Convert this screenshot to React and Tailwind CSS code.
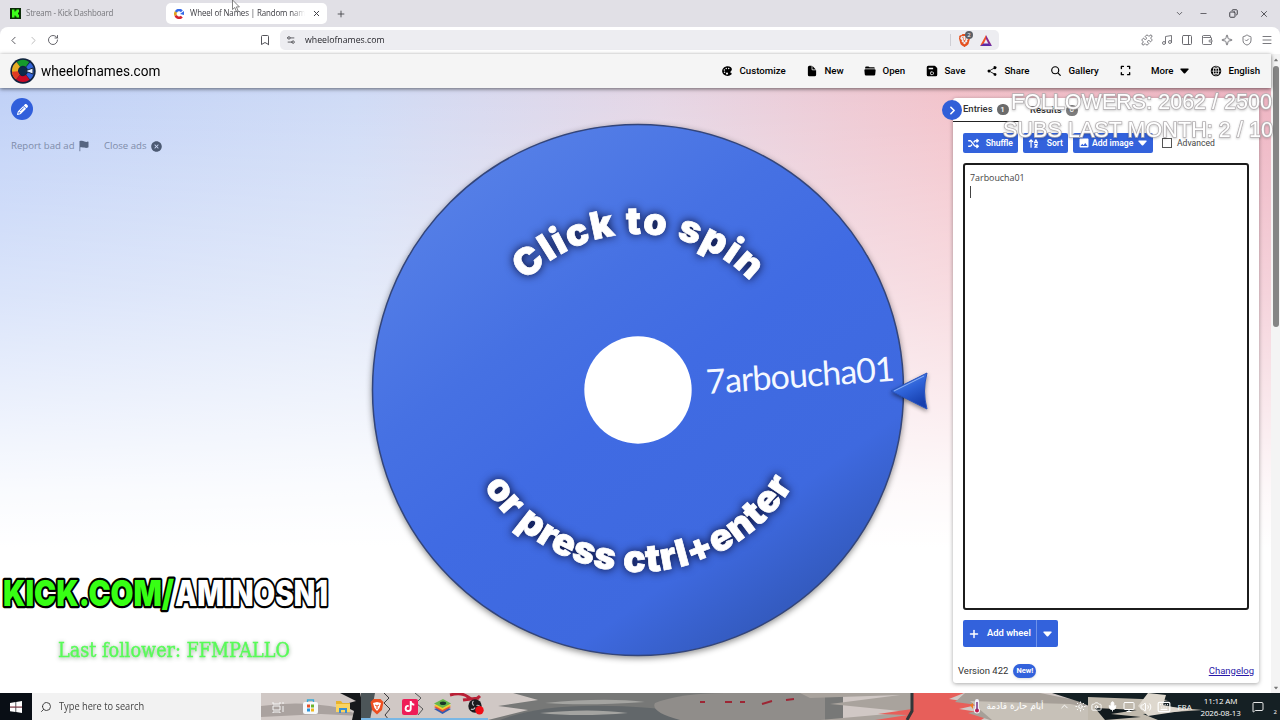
import { useState } from "react";
import {
    IoColorPalette,
    IoDocument,
    IoFolderOpen,
    IoSave,
    IoShareSocial,
    IoSearch,
    IoGlobe,
    IoCaretDown,
    IoCloseCircle,
    IoFlag,
} from "react-icons/io5";
import { MdImage } from "react-icons/md";
import { FaBrave, FaTiktok, FaArrowUpAZ, FaExpand, FaPencil, FaShuffle } from "react-icons/fa6";
import {
    Bookmark,
    ChevronDown,
    ChevronLeft,
    ChevronRight,
    ChevronUp,
    Copy,
    Keyboard,
    Menu,
    Mic,
    Minus,
    Monitor,
    Music,
    PanelRight,
    Plus,
    Puzzle,
    RotateCw,
    Search,
    Settings2,
    ShieldCheck,
    Sparkle,
    Sun,
    Volume2,
    Camera,
    MessageSquare,
    Wallet,
    X,
} from "lucide-react";

const navItems = [
    { label: "Customize", icon: IoColorPalette, width: "w-[85px]" },
    { label: "New", icon: IoDocument, width: "w-[58px]" },
    { label: "Open", icon: IoFolderOpen, width: "w-[62px]" },
    { label: "Save", icon: IoSave, width: "w-[60px]" },
    { label: "Share", icon: IoShareSocial, width: "w-[64px]" },
    { label: "Gallery", icon: IoSearch, width: "w-[70px]" },
];

function Caret({ className = "" }) {
    return (
        <svg width="9" height="6" viewBox="0 0 9 6" className={className}>
            <path d="M1 .5h7q1 .2.500 1L5.200 5.200q-.7.600-1.400 0L.5 1.500Q0 .7 1 .5z" fill="currentColor" />
        </svg>
    );
}

function TabStrip() {
    return (
        <div className="flex h-[27px] items-center bg-[#e1e0e6] text-[8.8px] text-[#3c3c42]">
            <div className="flex w-[166px] items-center pl-[10px] text-[#77777c]">
                <svg width="11" height="11" viewBox="0 0 11 11">
                    <rect width="11" height="11" fill="#0a2a06" />
                    <path d="M2 1.5h2.5v2h1v-1h1v-1H9v3H8v2h1v3H6.500v-1h-1v-1h-1v2H2z" fill="#3dff1a" />
                </svg>
                <span className="ml-[5px] inline-block origin-left scale-x-[0.9] whitespace-nowrap tracking-[-0.02em]">
                    Stream - Kick Dashboard
                </span>
            </div>
            <div className="flex h-[21px] w-[161px] items-center rounded-[5px] bg-white pl-[8px]">
                <svg width="10" height="10" viewBox="0 0 10 10" fill="none" strokeWidth="2.6">
                    <path d="M1.700 6.500A3.600 3.600 0 0 1 2 2.800" stroke="#e0a01c" />
                    <path d="M2 2.800A3.600 3.600 0 0 1 7.800 2.300" stroke="#3369e8" />
                    <path d="M1.700 6.500A3.600 3.600 0 0 0 7.800 7.600" stroke="#d5232f" />
                    <path d="M6 5l4-3v4z" fill="#3369e8" />
                </svg>
                <span className="ml-[6px] w-[115px] overflow-hidden [mask-image:linear-gradient(to_right,black_88%,transparent)]">
                    <span className="inline-block origin-left scale-x-[0.9] whitespace-nowrap tracking-[-0.015em]">
                        Wheel of Names | Random name
                    </span>
                </span>
                <X size={9} strokeWidth={2.6} className="ml-[7px]" />
            </div>
            <Plus size={10} className="ml-[9px]" />
            <div className="ml-auto flex items-center pr-[11px]">
                <ChevronDown size={9} />
                <Minus size={9} className="ml-[15px]" />
                <Copy size={9} strokeWidth={2.600} className="ml-[21px] -scale-x-100" />
                <X size={10} className="ml-[21px]" />
            </div>
        </div>
    );
}

function AddressBar() {
    return (
        <div className="bg-[#e1e0e6]">
            <div className="flex h-[27px] items-center rounded-t-[8px] bg-white pb-[1px] text-[#55555b]">
                <div className="flex w-[259px] items-center gap-[7px] pl-[7px]">
                    <ChevronLeft size={13} strokeWidth={1.800} />
                    <ChevronRight size={13} strokeWidth={1.800} className="text-[#bbb]" />
                    <RotateCw size={12} strokeWidth={1.800} />
                </div>
                <Bookmark size={12} strokeWidth={2} />
                <div className="ml-[9px] flex h-[20px] w-[719px] items-center rounded-[5px] bg-[#ededf1] pl-[6px] pr-[7px]">
                    <Settings2 size={10} strokeWidth={2.200} className="rotate-180" />
                    <span className="ml-[9px] inline-block origin-left scale-x-[0.92] text-[9.5px] text-[#26262b]">
                        wheelofnames.com
                    </span>
                    <div className="ml-auto h-[12px] w-px bg-[#cfcfd5]" />
                    <div className="relative ml-[7px]">
                        <FaBrave size={13} className="text-[#e5511f]" />
                        <span className="absolute -top-[3px] left-[7px] flex h-[8px] w-[8px] items-center justify-center rounded-full bg-[#5c5f66] text-[6px] leading-none text-white">
                            2
                        </span>
                    </div>
                    <svg width="12" height="11" viewBox="0 0 12 11" className="ml-[9px]">
                        <path d="M6 0L0 11l3.500-2L6 4z" fill="#f0502a" />
                        <path d="M6 0l6 11-3.500-2L6 4z" fill="#8a2a90" />
                        <path d="M0 11h12L8.500 8.500h-5z" fill="#5b2aa5" />
                    </svg>
                </div>
                <div className="ml-auto flex items-center gap-[8px] pr-[7px] text-[#6b6b70]">
                    <Puzzle size={12} strokeWidth={1.800} />
                    <Music size={12} strokeWidth={1.800} />
                    <PanelRight size={12} strokeWidth={2} />
                    <Wallet size={12} strokeWidth={1.800} />
                    <Sparkle size={12} strokeWidth={1.800} />
                    <ShieldCheck size={12} strokeWidth={1.800} />
                    <Menu size={12} strokeWidth={1.800} />
                </div>
            </div>
        </div>
    );
}

function Logo() {
    return (
        <svg width="26" height="26" viewBox="0 0 26 26">
            <circle cx="13" cy="13" r="12.700" fill="#10223f" />
            <g fill="none" strokeWidth="6">
                <path d="M8.500 6.300A8 8 0 0 1 17.500 6.400" stroke="#159a2c" />
                <path d="M7.600 18.900A8 8 0 0 1 8.300 6.400" stroke="#e6ad24" />
                <path d="M5 13.500A8 8 0 0 0 8 19.200" stroke="#df3a24" />
                <path d="M8 19.300A8 8 0 0 0 17.800 19.400" stroke="#c90a26" />
                <path d="M18.100 6.800A8 8 0 0 1 18.100 19.100" stroke="#3263d8" />
            </g>
            <circle cx="13" cy="13" r="4" fill="#0c2a4b" />
            <path d="M15 13l8-3v6z" fill="#e9f2ff" stroke="#10223f" strokeWidth="1" />
        </svg>
    );
}

function SiteHeader() {
    return (
        <header className="relative z-10 flex h-[34px] items-center bg-[#f5f5f5] pl-[10px] font-['Roboto',sans-serif] text-black shadow-[0_1px_4px_rgba(0,0,0,0.55)]">
            <Logo />
            <div className="ml-[5px] w-[680px]">
                <span className="inline-block origin-left scale-x-[0.895] text-[15.2px]">wheelofnames.com</span>
            </div>
            <nav className="flex items-center whitespace-nowrap text-[9.7px] font-medium">
                {navItems.map(({ label, icon: Icon, width }) => (
                    <div key={label} className={`flex items-center gap-[6.500px] ${width}`}>
                        <Icon size={12} />
                        {label}
                    </div>
                ))}
                <div className="w-[31px]">
                    <FaExpand size={11} />
                </div>
                <div className="flex w-[59px] items-center gap-[6px]">
                    More
                    <Caret />
                </div>
                <div className="flex items-center gap-[6.500px]">
                    <IoGlobe size={12} />
                    English
                </div>
            </nav>
        </header>
    );
}

function Wheel() {
    return (
        <svg width="593" height="605" viewBox="360 88 593 605" className="shrink-0">
            <defs>
                <linearGradient id="face" x1="0.200" y1="0.050" x2="0.850" y2="0.950">
                    <stop offset="0" stopColor="#5680e7" />
                    <stop offset="0.300" stopColor="#4671e3" />
                    <stop offset="0.500" stopColor="#406be3" />
                    <stop offset="0.780" stopColor="#3e69df" />
                    <stop offset="0.930" stopColor="#345bc0" />
                    <stop offset="1" stopColor="#365cbd" />
                </linearGradient>
                <linearGradient id="tip" x1="0" y1="0" x2="0.500" y2="1">
                    <stop offset="0" stopColor="#5c91ef" />
                    <stop offset="0.550" stopColor="#2e62d8" />
                    <stop offset="1" stopColor="#1740ae" />
                </linearGradient>
                <path id="arcTop" d="M481 391A157 157 0 0 1 795 391" />
                <path id="arcBottom" d="M456 390A182 182 0 0 0 820 390" />
            </defs>
            <circle
                cx="638"
                cy="390"
                r="265.500"
                fill="url(#face)"
                stroke="#33457a"
                strokeWidth="1.500"
                className="drop-shadow-[0_2px_3px_rgba(0,0,0,0.45)]"
            />
            <circle cx="638" cy="390" r="53.700" fill="#fff" />
            <text
                x="707"
                y="394"
                transform="rotate(-4.100 707 394)"
                textLength="189"
                fontSize="34"
                fill="#f4f8ff"
                className="font-['Lato','Open_Sans',sans-serif]"
            >
                7arboucha01
            </text>
            <g
                fill="#fff"
                stroke="#fff"
                strokeWidth="0.700"
                fontSize="37.500"
                textAnchor="middle"
                className="font-['Inter',sans-serif] font-black drop-shadow-[0_0_5px_rgba(0,0,30,0.9)]"
            >
                <text letterSpacing="1.600">
                    <textPath href="#arcTop" startOffset="50.200%">Click to spin</textPath>
                </text>
                <text letterSpacing="0.900">
                    <textPath href="#arcBottom" startOffset="50.200%">or press ctrl+enter</textPath>
                </text>
            </g>
            <g className="drop-shadow-[0_2px_2px_rgba(0,0,0,0.45)]">
                <path d="M891 391L927 373Q922 391 927 409z" fill="url(#tip)" stroke="#2752bd" strokeWidth="1" />
                <path d="M894 391l30-15" stroke="#8fb4f7" strokeWidth="1" />
            </g>
        </svg>
    );
}

function EntriesPanel() {
    const [entries, setEntries] = useState("7arboucha01\n");

    return (
        <div className="relative mt-[10px] flex h-[585px] w-[306px] shrink-0 flex-col rounded-[3px] bg-white shadow-[0_1px_4px_rgba(0,0,0,0.35)] font-['Roboto',sans-serif] text-[#333]">
            <div className="flex h-[24px] text-[9.500px] font-medium">
                <div className="flex w-[66px] items-center gap-[4px] border-b-[1.500px] border-[#222] pl-[10px]">
                    Entries
                    <span className="flex h-[11px] w-[12px] shrink-0 items-center justify-center rounded-full bg-[#6b6b6b] text-[8px] text-white">
                        1
                    </span>
                </div>
                <div className="flex items-center gap-[4px] pl-[11px]">
                    Results
                    <span className="flex h-[11px] w-[12px] items-center justify-center rounded-full bg-[#7c7c7c] text-[8px] text-white">
                        0
                    </span>
                </div>
            </div>
            <div className="absolute -left-[11px] top-[2px] flex h-[20px] w-[20px] items-center justify-center rounded-full bg-[#315fd8] text-white">
                <ChevronRight size={13} strokeWidth={3} />
            </div>

            <div className="ml-[10px] mt-[11px] flex h-[20px] items-center gap-[5px] whitespace-nowrap text-[8.600px] font-semibold text-white">
                <button className="flex h-full w-[55px] items-center justify-between rounded-[2px] bg-[#3362dc] pl-[5px] pr-[5px]">
                    <FaShuffle size={11} />
                    Shuffle
                </button>
                <button className="flex h-full w-[45px] items-center justify-between rounded-[2px] bg-[#3362dc] pl-[5px] pr-[5px]">
                    <FaArrowUpAZ size={11} />
                    Sort
                </button>
                <button className="flex h-full w-[80px] items-center rounded-[2px] bg-[#3362dc] pl-[5px]">
                    <MdImage size={12} />
                    <span className="ml-[2px] w-[40px]">Add image</span>
                    <Caret className="ml-[6px]" />
                </button>
                <div className="ml-[4px] flex items-center gap-[5px] font-normal text-[#444]">
                    <span className="h-[10px] w-[10px] border border-[#555]" />
                    Advanced
                </div>
            </div>

            <textarea
                value={entries}
                onChange={(e) => setEntries(e.target.value)}
                className="ml-[10px] mt-[10px] h-[447px] w-[286px] resize-none rounded-[3px] border-2 border-[#1c1c1c] bg-white px-[5px] py-[6px] font-['Open_Sans',sans-serif] text-[8.900px] leading-[14px] text-[#444] outline-none"
            />
            {/* text cursor on the empty second line */}
            <div className="absolute left-[17px] top-[88px] h-[12px] w-px bg-[#444]" />

            <div className="ml-[10px] mt-[10px] flex h-[27px] w-[95px] shrink-0 rounded-[2px] bg-[#3362dc] text-[9.400px] font-semibold text-white">
                <button className="flex w-[74px] items-center gap-[7px] border-r border-[#6e92ea] pl-[5px]">
                    <Plus size={12} strokeWidth={3} />
                    <span className="whitespace-nowrap">Add wheel</span>
                </button>
                <button className="flex flex-1 items-center justify-center">
                    <Caret />
                </button>
            </div>

            <div className="mt-[17px] flex h-[14px] items-center pl-[5px] pr-[5px] text-[9.500px]">
                Version 422
                <span className="ml-[5px] flex h-[14px] w-[23px] items-center justify-center rounded-full bg-[#3362dc] text-[7.500px] font-bold text-white shadow">
                    New!
                </span>
                <a className="ml-auto text-[#2a18a8] underline">Changelog</a>
            </div>
        </div>
    );
}

function Overlays() {
    return (
        <>
            <svg width="340" height="100" viewBox="0 570 340 100" className="absolute left-0 top-[570px]">
                <g
                    fontSize="36"
                    stroke="#000"
                    strokeWidth="4.500"
                    strokeLinejoin="round"
                    paintOrder="stroke"
                    className="font-['Inter',sans-serif] font-black"
                >
                    <text x="3" y="606" textLength="171" lengthAdjust="spacingAndGlyphs" fill="#37ff14">
                        KICK.COM/
                    </text>
                    <text x="175" y="606" textLength="153" lengthAdjust="spacingAndGlyphs" fill="#fff">
                        AMINOSN1
                    </text>
                </g>
                <text
                    x="58"
                    y="657"
                    textLength="232"
                    lengthAdjust="spacingAndGlyphs"
                    fontSize="19.500"
                    fill="#58fb58"
                    stroke="#58fb58"
                    strokeWidth="0.400"
                    className="font-['DejaVu_Serif',serif] drop-shadow-[0_1px_2px_rgba(0,60,0,0.4)]"
                >
                    Last follower: FFMPALLO
                </text>
            </svg>
            <svg width="290" height="60" viewBox="990 88 290 60" className="absolute left-[990px] top-[88px] z-20">
                <g
                    fill="#fff"
                    fontSize="21.500"
                    stroke="#b4b0b2"
                    strokeWidth="1.600"
                    paintOrder="stroke"
                    className="font-['Liberation_Sans',sans-serif] drop-shadow-[0_1px_1px_rgba(0,0,0,0.2)]"
                >
                    <text x="1011" y="108.500" textLength="261">FOLLOWERS: 2062 / 2500</text>
                    <text x="1003" y="136.500" textLength="270">SUBS LAST MONTH: 2 / 10</text>
                </g>
            </svg>
            <svg width="10" height="16" viewBox="0 0 10 16" className="absolute left-[232px] top-0 z-20">
                <path d="M0.500 0v9.500l2.300-2 1.600 4 1.700-.8-1.700-3.800h3z" fill="#fff" stroke="#666" strokeWidth="0.800" />
            </svg>
        </>
    );
}

function TaskbarArt() {
    return (
        <svg width="1019" height="27" viewBox="261 0 1019 27" className="absolute inset-0">
            <rect x="261" width="1019" height="27" fill="#d0c8c5" />
            <path d="M261 13q40-6 80 2l20 8-40-2-60 3z" fill="#aaa29f" />
            <path d="M340 0h20l6 27h-14l2-9-12-6 14-4z" fill="#17191c" />
            <path d="M361 0h14l-5 27h-9z" fill="#4c5558" />
            <path d="M384 0l5 5-5 5 6 6-5 6 4 5" fill="none" stroke="#3a3a3c" />
            <path d="M415 0l6 5-5 5 7 6-5 6" fill="none" stroke="#555" />
            <path d="M488 27l40-10-30-4 40-6-25-7h330v27z" fill="#777877" />
            <path d="M500 27q50-20 150-12t40 12z" fill="#62676a" />
            <path d="M545 10q60-6 100-1-60 4-100 1zM540 20q50-5 88 0-50 4-88 0z" fill="#a4a4a1" />
            <path d="M655 10q25-10 70-10h100v27H680q-30-8-25-17z" fill="#908d8a" />
            <path d="M450 2q12-3 18 2t12-1M463 7l16-2" stroke="#b92036" strokeWidth="3" fill="none" />
            <path d="M700 9h5M725 9h7M740 9h5M762 11l10-3M786 7l8-1" stroke="#9d2634" strokeWidth="2" />
            <path d="M810 5l90-3-70 9 80 8-90 8h70l50-10V0H800z" fill="#a9a39d" />
            <path d="M912 0h52l-15 6 32 5-22 5 32 5-10 6H875l33-5-30-1 34-5z" fill="#e75f5a" />
            <path d="M912 0v18l-5 9" fill="none" stroke="#333638" strokeWidth="3" />
            <path d="M965 0h75l45 9v18h-95l-22-7 25-6-38-5z" fill="#a69f98" />
            <path d="M970 8l100 3 30 5v11H992z" fill="#c7c1b8" />
            <path d="M1052 0h228v27H1094l4-10-18-8z" fill="#152024" />
            <path d="M1088 4l80 3-20 5 55 5-60 4 15 6h-70z" fill="#c0b9ad" />
            <path d="M1148 0l18 2-3 10 25 5-40 6-10-10z" fill="#ded8ce" />
            <path d="M1095 15l42 2-26 4 30 3-36 3z" fill="#11191d" />
        </svg>
    );
}

function Taskbar() {
    return (
        <footer className="flex h-[27px] text-white">
            <div className="flex w-[32px] items-center justify-center bg-[#090e15]">
                <svg width="12" height="12" viewBox="0 0 12 12">
                    <path d="M0 2l5.500-1v4.700H0zM6.200.9L12 0v5.700H6.200zM0 6.400h5.500V11L0 10.200zM6.200 6.400H12V12l-5.800-.9z" fill="#fff" />
                    <path d="M0 6h12" stroke="#b95061" strokeWidth="0.800" />
                </svg>
            </div>
            <div className="flex w-[229px] items-center bg-[#f2f2f2] pl-[8px] text-[10.400px] text-[#444]">
                <Search size={12} strokeWidth={1.800} className="-scale-x-100 text-[#333]" />
                <span className="ml-[7px] mt-[1px] inline-block origin-left scale-x-[0.89] whitespace-nowrap">
                    Type here to search
                </span>
            </div>
            <div className="relative flex flex-1">
                <TaskbarArt />
                <div className="relative flex items-center">
                    <div className="flex w-[33px] justify-center">
                        <svg width="12" height="12" viewBox="0 0 12 12" fill="none" stroke="#f5f5f5">
                            <path d="M1 1v2h7V1M1 5h7v4H1zM1 12v-1h7v1M11 1v2M11 5v6" />
                        </svg>
                    </div>
                    <div className="flex w-[33px] justify-center">
                        <svg width="15" height="15" viewBox="0 0 15 15">
                            <path d="M4.500 4V1h6v3" fill="none" stroke="#36a9d8" strokeWidth="1.300" />
                            <rect y="3" width="15" height="12" rx="2" fill="#f5f9fc" />
                            <path d="M4 5.500h3v3H4z" fill="#e8502a" />
                            <path d="M8 5.500h3v3H8z" fill="#6ab42c" />
                            <path d="M4 9.500h3v3H4z" fill="#2893dc" />
                            <path d="M8 9.500h3v3H8z" fill="#f3b81b" />
                        </svg>
                    </div>
                    <div className="flex w-[33px] justify-center">
                        <svg width="15" height="13" viewBox="0 0 15 13">
                            <path d="M0 1h5l1.500 2H14v9H0z" fill="#e9b22c" />
                            <path d="M0 4h14v8H0z" fill="#fbd45f" />
                            <path d="M3 13V8h8v5H9v-3H5v3z" fill="#3b8fd0" />
                        </svg>
                    </div>
                    <div className="flex w-[33px] justify-center">
                        <svg width="14" height="16" viewBox="0 0 14 16">
                            <path d="M3.500 0h7L13.500 3 12 11l-5 4.500L2 11 .5 3z" fill="#ee4f20" />
                            <path d="M3 4l4-1 4 1-1.500 5L7 12 4.500 9z" fill="#fff" />
                            <path d="M5 6l2 1 2-1M7 7v3" stroke="#ee4f20" fill="none" />
                        </svg>
                    </div>
                    <div className="flex w-[33px] justify-center">
                        <div className="flex h-[16px] w-[16px] items-center justify-center rounded-[2px] bg-[#ee1d58]">
                            <FaTiktok size={11} />
                        </div>
                    </div>
                    <div className="flex w-[33px] justify-center">
                        <svg width="17" height="15" viewBox="0 0 17 15">
                            <path d="M0 10l8.500 5L17 10l-8-3z" fill="#345bb0" />
                            <path d="M0 8l8.500 5L17 8 9 4z" fill="#e85138" />
                            <path d="M0 6.500L8.500 11 17 6.500 9 2z" fill="#f4cf31" />
                            <path d="M0 4.500L8.500 9 17 4.500 9 0z" fill="#67b74a" />
                            <ellipse cx="9" cy="4.300" rx="3.200" ry="1.800" fill="#193629" />
                        </svg>
                    </div>
                    <div className="flex w-[33px] justify-center">
                        <svg width="16" height="16" viewBox="0 0 16 16">
                            <circle cx="7" cy="7" r="6.700" fill="#1b1b1e" />
                            <g fill="none" stroke="#b9b9bd" strokeWidth="1.200">
                                <path d="M6 6.500A2.600 2.600 0 0 1 5.500 2" />
                                <path d="M8.500 6.500A2.600 2.600 0 0 1 12 8" />
                                <path d="M7 8.500A2.600 2.600 0 0 1 3 10" />
                            </g>
                            <circle cx="11.500" cy="11.300" r="4.200" fill="#f00d16" />
                        </svg>
                    </div>
                </div>
                <div className="absolute bottom-0 left-[100px] h-[2px] w-[127px] bg-[#79b7e5]" />
                <div className="relative ml-auto flex items-center text-[8px]">
                    <svg width="11" height="15" viewBox="0 0 11 15">
                        <path d="M0 6l3-2v6z" fill="#ef7d21" />
                        <rect x="5" width="4" height="12" rx="2" fill="#f2f3fa" />
                        <circle cx="7" cy="11.500" r="3" fill="#f2f3fa" />
                        <circle cx="7" cy="11.500" r="2" fill="#c31649" />
                        <path d="M7 3v8" stroke="#77347f" strokeWidth="1.500" />
                    </svg>
                    <span dir="rtl" className="ml-[7px] w-[56px] whitespace-nowrap text-center font-['DejaVu_Sans',sans-serif] text-[9px]">
                        أيام حارة قادمة
                    </span>
                    <div className="ml-[15px] flex items-center gap-[5px]">
                        <ChevronUp size={11} />
                        <Sun size={11} />
                        <Camera size={11} />
                        <Mic size={11} fill="white" />
                        <Monitor size={12} />
                        <Volume2 size={12} />
                        <Keyboard size={14} />
                    </div>
                    <span className="ml-[7px] w-[15px]">FRA</span>
                    <div className="ml-[7px] w-[42px] whitespace-nowrap text-center text-[8px] leading-[12px] tracking-[-0.02em]">
                        <div>11:12 AM</div>
                        <div>2026-08-13</div>
                    </div>
                    <MessageSquare size={12} strokeWidth={1.800} className="ml-[10px]" />
                    <span className="ml-[10px] mr-[3px] mt-[12px] text-[6px]">2</span>
                </div>
            </div>
        </footer>
    );
}

export default function App() {
    return (
        <div className="relative flex h-[720px] w-[1280px] flex-col overflow-hidden bg-white font-['Open_Sans',sans-serif]">
            <TabStrip />
            <AddressBar />
            <div className="flex h-[639px]">
                <div className="w-[1271px]">
                    <SiteHeader />
                    <main className="flex h-[605px] bg-[linear-gradient(to_bottom,rgba(255,255,255,0),rgba(255,255,255,0.420)_34%,rgba(255,255,255,0.900)_66%,white_76%),linear-gradient(to_right,#c0d1f7,#cfdbf6_28%,#e5d6e5_52%,#f3c3cb_75%,#eeb4c2)]">
                        <aside className="w-[360px] shrink-0 pl-[11px] pt-[10px]">
                            <div className="flex h-[22px] w-[22px] items-center justify-center rounded-full bg-[#315fdb] text-white">
                                <FaPencil size={11} />
                            </div>
                            <div className="mt-[19px] flex items-center whitespace-nowrap text-[9.600px] text-[#7e8ca9]">
                                <span className="w-[63px]">Report bad ad</span>
                                <IoFlag size={12} className="ml-[4px] text-[#566581]" />
                                <span className="ml-[14px] w-[42px]">Close ads</span>
                                <IoCloseCircle size={13} className="ml-[4px] text-[#4c5a73]" />
                            </div>
                        </aside>
                        <Wheel />
                        <EntriesPanel />
                    </main>
                </div>
                <div className="flex w-[9px] flex-col items-center bg-[#f4f4f4] pb-[2px] pt-[3px] text-[#777]">
                    <IoCaretDown size={6} className="rotate-180" />
                    <div className="mt-[3px] h-[261px] w-[6px] rounded-full bg-[#858585]" />
                    <IoCaretDown size={6} className="mt-auto" />
                </div>
            </div>
            <Taskbar />
            <Overlays />
        </div>
    );
}
